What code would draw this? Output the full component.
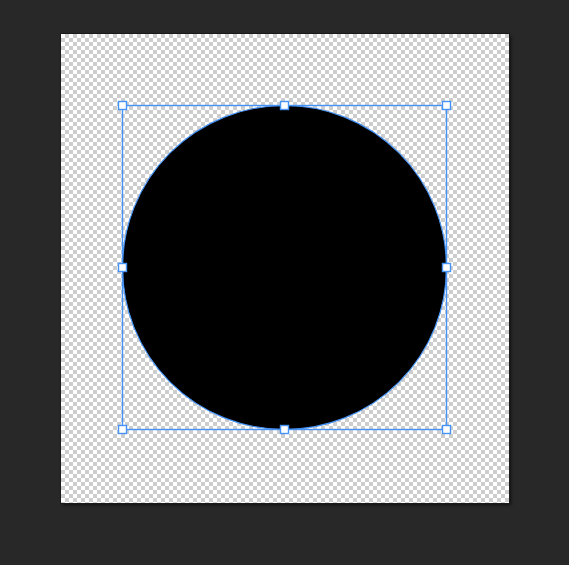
import React from 'react';

// transform box around the shape, in canvas coordinates
const box = { x: 61.5, y: 71.5, w: 324, h: 324 };

const handles = [
  [0, 0], [0.5, 0], [1, 0],
  [0, 0.5], [1, 0.5],
  [0, 1], [0.5, 1], [1, 1],
];

const App = () => {
  return (
    <div className="w-[569px] h-[565px] bg-[#282828] pl-[61px] pt-[34px]">
      <div className="relative w-[448px] h-[469px] bg-[repeating-conic-gradient(#cdcdcd_0%_25%,#ffffff_0%_50%)] bg-[length:8px_8px] shadow-[0_0_0_1px_#1b1b1b,2px_2px_3px_rgba(0,0,0,0.6)]">
        <svg className="absolute inset-0" width="448" height="469" viewBox="0 0 448 469">
          <circle cx="223.5" cy="233.5" r="162" fill="#000000" stroke="#4593f7" strokeWidth="1.2" />
          <rect x={box.x} y={box.y} width={box.w} height={box.h} fill="none" stroke="#4593f7" strokeWidth="1.4" />
          {handles.map(([fx, fy], i) => (
            <rect
              key={i}
              x={box.x + fx * box.w - 4}
              y={box.y + fy * box.h - 4}
              width="8"
              height="8"
              fill="#ffffff"
              stroke="#4593f7"
              strokeWidth="1.4"
            />
          ))}
        </svg>
      </div>
    </div>
  );
};

export default App;
